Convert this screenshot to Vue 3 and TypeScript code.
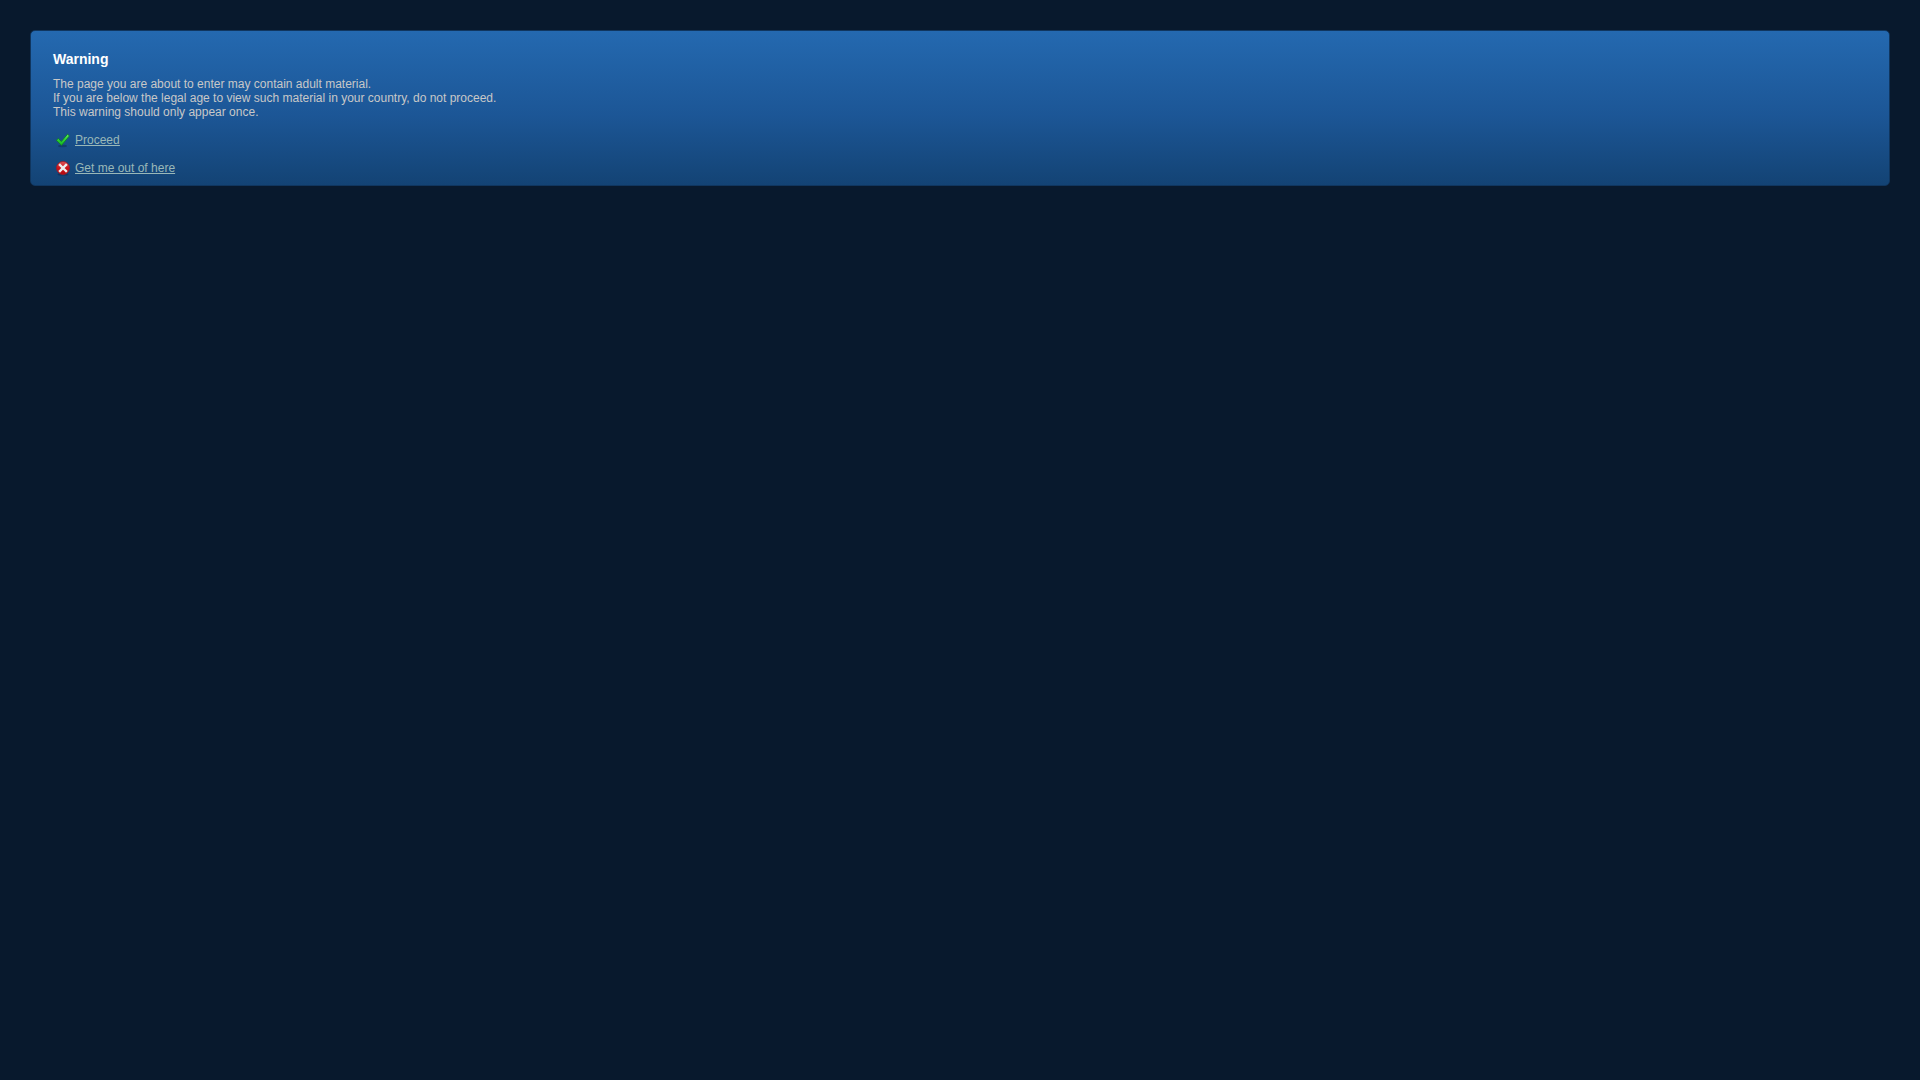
<script setup lang="ts">
const warningLines: string[] = [
  'The page you are about to enter may contain adult material.',
  'If you are below the legal age to view such material in your country, do not proceed.',
  'This warning should only appear once.',
]
</script>

<template>
  <main class="panel">
    <h1 class="title">Warning</h1>
    <p class="message">
      <template v-for="(line, i) in warningLines" :key="i">{{ line }}<br /></template>
    </p>
    <nav class="choices">
      <a class="choice" href="#proceed">
        <svg class="icon" viewBox="0 0 16 16" aria-hidden="true">
          <defs>
            <linearGradient id="tick" x1="0" y1="0" x2="0" y2="1">
              <stop offset="0" stop-color="#5cf05c" />
              <stop offset="0.5" stop-color="#2bd236" />
              <stop offset="1" stop-color="#14b420" />
            </linearGradient>
          </defs>
          <ellipse cx="7.5" cy="14" rx="4.5" ry="1.2" fill="#0b2c52" opacity="0.5" />
          <path d="M1.4 8.2 3.4 6.4 6.3 9.5 12.6 2.2 14.4 3.9 6.5 13.4Z" fill="url(#tick)" stroke="#107a20" stroke-width="0.8" stroke-linejoin="round" />
        </svg>
        <span class="label">Proceed</span>
      </a>
      <a class="choice" href="#leave">
        <svg class="icon" viewBox="0 0 16 16" aria-hidden="true">
          <defs>
            <linearGradient id="stop" x1="0" y1="0" x2="0" y2="1">
              <stop offset="0" stop-color="#e0565a" />
              <stop offset="0.5" stop-color="#cc1219" />
              <stop offset="1" stop-color="#b30910" />
            </linearGradient>
          </defs>
          <ellipse cx="8" cy="14.4" rx="5.5" ry="1.2" fill="#0b2c52" opacity="0.6" />
          <circle cx="8" cy="8" r="6.5" fill="url(#stop)" stroke="#9c1a26" stroke-width="0.8" />
          <path d="M5 5 11 11M11 5 5 11" stroke="#eeeeee" stroke-width="2.4" stroke-linecap="square" />
        </svg>
        <span class="label">Get me out of here</span>
      </a>
    </nav>
  </main>
</template>

<style>
body {
  background: #08192d;
}
</style>

<style scoped>
.panel {
  margin: 30px;
  padding: 20px 22px 10px;
  border: 1px solid #10365f;
  border-radius: 5px;
  background: linear-gradient(#2469b0, #1c5696 55%, #134374);
  color: #c8c8c8;
  font: 12px/14px "Liberation Sans", Arial, sans-serif;
}

.title {
  margin: 0 0 10px;
  color: #fff;
  font-size: 14px;
  line-height: 16px;
}

.message {
  margin: 0 0 14px;
}

.choices {
  display: flex;
  flex-direction: column;
  align-items: flex-start;
  gap: 14px;
}

.choice {
  display: flex;
  align-items: center;
  gap: 4px;
  height: 14px;
  padding-left: 2px;
  color: #9ab8b8;
}

.icon {
  width: 16px;
  height: 16px;
}

.label {
  text-decoration: underline;
}
</style>
